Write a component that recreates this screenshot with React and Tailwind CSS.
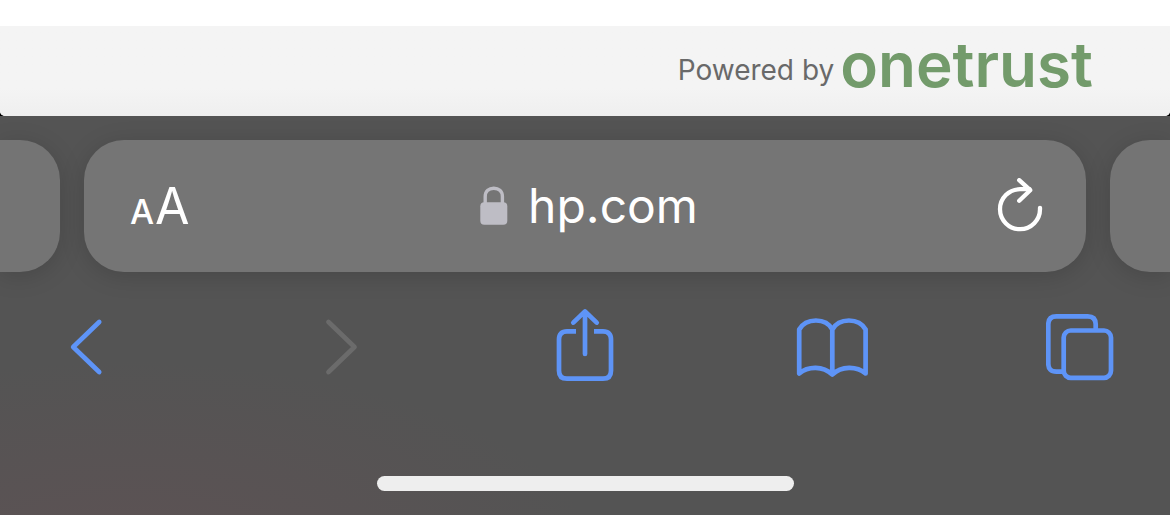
import { clsx } from "clsx";

function ReloadIcon() {
  return (
    <svg viewBox="0 0 48 56" className="h-14 w-12" fill="none" stroke="currentColor" strokeWidth="4.3" strokeLinecap="round" strokeLinejoin="round">
      <path d="M44 29.8V31A20 20 0 1 1 24 11.2H33.5" />
      <path d="M23.2 2.2L34.2 12.2L23.2 22.8" />
    </svg>
  );
}

function LockIcon() {
  return (
    <svg viewBox="0 0 28 40" className="h-10 w-7 text-[#bebdc5]" fill="none">
      <path d="M5.2 19V10.5C5.2 5 9 2.2 13.8 2.2S22.4 5 22.4 10.5V19" stroke="currentColor" strokeWidth="3.4" />
      <rect x="0.3" y="16.2" width="27" height="22.6" rx="4" fill="currentColor" />
    </svg>
  );
}

const acciones = [
  {
    label: "Back",
    icon: <path d="M55.2 14L29.2 39L55.2 64" />,
  },
  {
    label: "Forward",
    disabled: true,
    icon: <path d="M33.5 14L59.5 39L33.5 64" />,
  },
  {
    label: "Share",
    icon: (
      <>
        <path d="M31 23.3H22Q14 23.3 14 31.3V62.7Q14 70.7 22 70.7H58Q66 70.7 66 62.7V31.3Q66 23.3 58 23.3H49" strokeLinecap="butt" />
        <path d="M40 46V4M28.3 14.6L40 3.4L51.7 14.6" />
      </>
    ),
  },
  {
    label: "Bookmarks",
    icon: (
      <path d="M3.2 65.5V21.5C10 9.5 30 9.5 36.3 21.5C43 9.5 62.8 9.5 69.6 21.5V65.5C60.5 57.8 45.5 57.8 36.3 66.5C27 57.8 12.3 57.8 3.2 65.5ZM36.3 21V66" />
    ),
  },
  {
    label: "Tabs",
    icon: (
      <>
        <path d="M17.5 63.7H10.3Q2.3 63.7 2.3 55.7V16.3Q2.3 8.3 10.3 8.3H41.7Q49.7 8.3 49.7 16.3V22" strokeLinecap="butt" />
        <rect x="17.7" y="22.5" width="47.3" height="47.3" rx="7" />
      </>
    ),
  },
];

export default function App() {
  return (
    <div className="flex min-h-screen flex-col overflow-hidden bg-black font-['Inter','Liberation_Sans',sans-serif]">
      {/* Page content */}
      <div className="overflow-hidden rounded-b-[5px] bg-white pt-[26px]">
        <footer className="flex h-[90px] items-center justify-end gap-1.5 bg-linear-to-b from-[#f4f4f4] from-70% to-[#efefef] pr-[77px]">
          <span className="pb-0.5 text-[28px] leading-[36px] text-[#696969]">Powered by</span>
          <a href="#onetrust" className="pb-3 text-[62px] leading-[76px] font-semibold text-[#739b6b]">
            onetrust
          </a>
        </footer>
      </div>

      {/* Browser toolbar */}
      <div className="flex flex-1 flex-col bg-[#545454] bg-[radial-gradient(ellipse_at_11%_112%,#66505480_0%,#66505400_32%)] pt-6 pb-6">
        <div className="flex h-[132px] gap-6">
          <div className="w-15 rounded-r-[40px] bg-[#747474] shadow-[0_4px_24px_rgba(0,0,0,0.15)]" />
          <div className="flex flex-1 items-center justify-between rounded-[40px] bg-[#757575] px-[42px] text-white shadow-[0_4px_24px_rgba(0,0,0,0.15)]">
            <button aria-label="Page settings" className="flex w-20 items-baseline gap-px pl-1">
              <span className="text-[34px] font-medium">A</span>
              <span className="text-[50px] leading-[60px]">A</span>
            </button>
            <button aria-label="Address" className="flex items-center gap-5 text-[48px] leading-[60px]">
              <LockIcon />
              hp.com
            </button>
            <button aria-label="Reload" className="flex w-18 justify-end">
              <ReloadIcon />
            </button>
          </div>
          <div className="w-15 rounded-l-[40px] bg-[#747474] shadow-[0_4px_24px_rgba(0,0,0,0.15)]" />
        </div>

        <nav className="mt-9 flex justify-between px-11">
          {acciones.map(({ label, icon, disabled }) => (
            <button
              key={label}
              aria-label={label}
              disabled={disabled}
              className={clsx("size-20", disabled ? "text-[#6b6b6b]" : "text-[#5e94f7]")}
            >
              <svg viewBox="0 0 80 80" className="size-20" fill="none" stroke="currentColor" strokeWidth="4.7" strokeLinecap="round" strokeLinejoin="round">
                {icon}
              </svg>
            </button>
          ))}
        </nav>

        {/* Home indicator */}
        <div className="mx-auto mt-auto h-[15px] w-[417px] max-w-full rounded-full bg-[#eeeeee]" />
      </div>
    </div>
  );
}
